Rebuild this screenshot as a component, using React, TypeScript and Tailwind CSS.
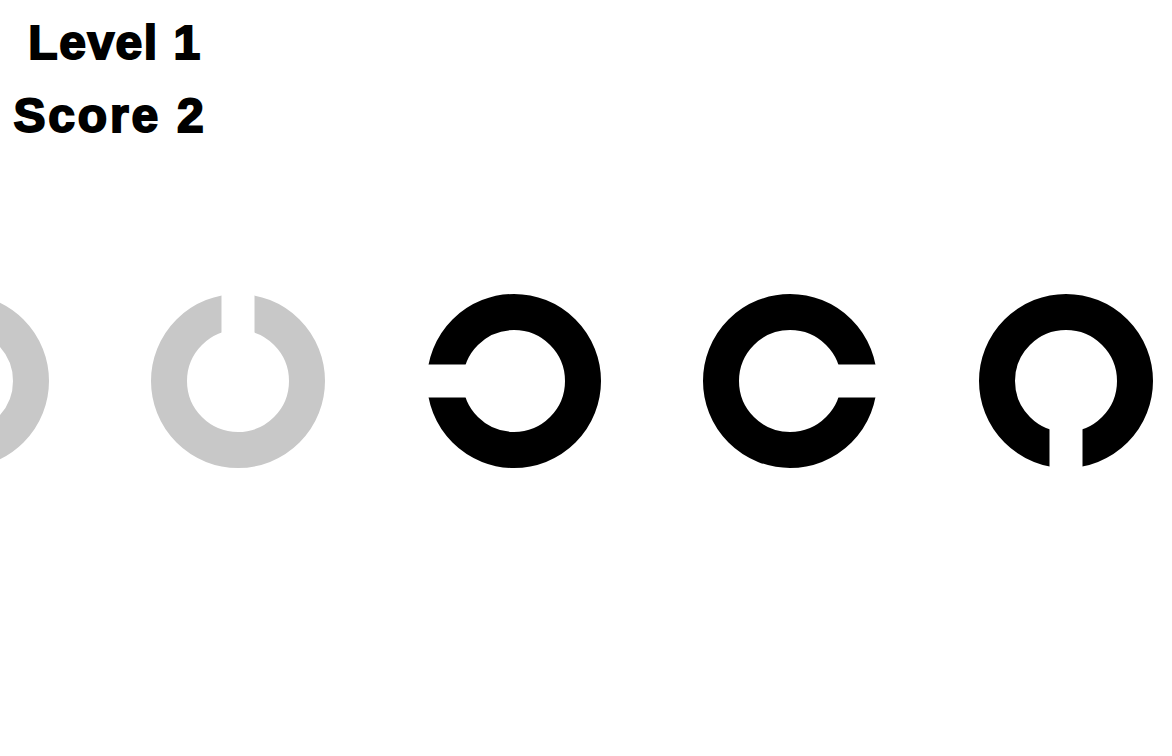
type Dir = 'up' | 'down' | 'left' | 'right';

const rotation: Record<Dir, number> = { right: 0, down: 90, left: 180, up: 270 };

const rings: { dir: Dir; faded: boolean }[] = [
  { dir: 'left', faded: true },
  { dir: 'up', faded: true },
  { dir: 'left', faded: false },
  { dir: 'right', faded: false },
  { dir: 'down', faded: false },
];

function LandoltC({ dir, faded }: { dir: Dir; faded: boolean }) {
  const color = faded ? '#c8c8c8' : '#000000';
  return (
    <svg width="174" height="174" viewBox="0 0 174 174" className="shrink-0">
      <circle cx="87" cy="87" r="69" fill="none" stroke={color} strokeWidth="36" />
      {/* gap */}
      <rect x="87" y="70.5" width="90" height="33" fill="#ffffff" transform={`rotate(${rotation[dir]} 87 87)`} />
    </svg>
  );
}

export default function App() {
  return (
    <div className="w-[1172px] h-[756px] bg-white overflow-hidden font-['Liberation_Sans',Arial,sans-serif]">
      <div className="w-[220px] pt-[19px] flex flex-col gap-[25px] text-center text-[48px] leading-[48px] font-bold text-black [-webkit-text-stroke:2px_#000]">
        <div className="pl-[10px] tracking-[1.5px]">Level 1</div>
        <div className="tracking-[2.8px]">Score 2</div>
      </div>
      <div className="mt-[154px] ml-[-125px] flex flex-row gap-[102px]">
        {rings.map((r, i) => (
          <LandoltC key={i} dir={r.dir} faded={r.faded} />
        ))}
      </div>
    </div>
  );
}
